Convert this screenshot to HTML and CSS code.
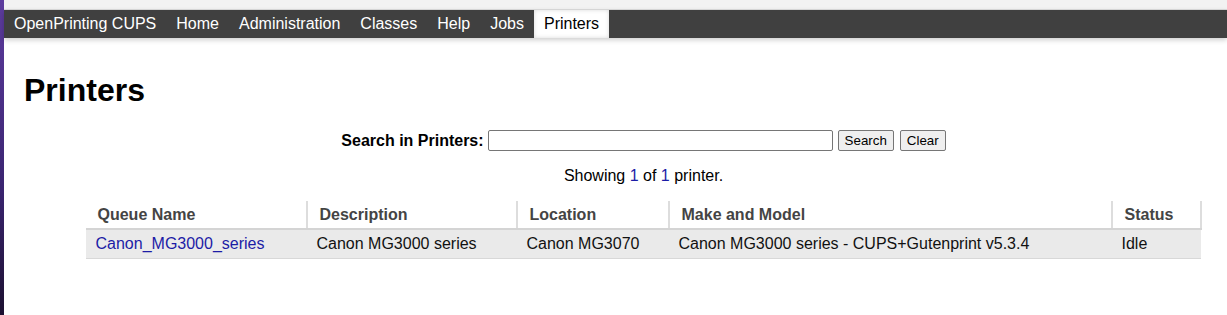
FILE: index.html
```html
<!DOCTYPE html>
<html lang="en">
<head>
    <meta charset="UTF-8">
    <title>Printers - CUPS</title>
    <link rel="stylesheet" href="styles.css">
</head>
<body>
<div class="desktop"></div>
<div class="window">
    <div class="topline"></div>
    <ul class="header">
        <li><a href="#">OpenPrinting CUPS</a></li>
        <li><a href="#">Home</a></li>
        <li><a href="#">Administration</a></li>
        <li><a href="#">Classes</a></li>
        <li><a href="#">Help</a></li>
        <li><a href="#">Jobs</a></li>
        <li><a class="active" href="#">Printers</a></li>
    </ul>
    <div class="body">
        <h1>Printers</h1>
        <div class="center">
            <form class="search">
                <label for="query">Search in Printers:</label>
                <input type="search" id="query" size="40">
                <button type="button">Search</button>
                <button type="button">Clear</button>
            </form>
            <p class="count">Showing <a href="#">1</a> of <a href="#">1</a> printer.</p>
            <table class="list">
                <colgroup>
                    <col style="width: 221px">
                    <col style="width: 210px">
                    <col style="width: 152px">
                    <col style="width: 443px">
                    <col style="width: 89px">
                </colgroup>
                <thead>
                <tr>
                    <th>Queue Name</th>
                    <th>Description</th>
                    <th>Location</th>
                    <th>Make and Model</th>
                    <th>Status</th>
                </tr>
                </thead>
                <tbody>
                <tr>
                    <td><a href="#">Canon_MG3000_series</a></td>
                    <td>Canon MG3000 series</td>
                    <td>Canon MG3070</td>
                    <td>Canon MG3000 series - CUPS+Gutenprint v5.3.4</td>
                    <td>Idle</td>
                </tr>
                </tbody>
            </table>
        </div>
    </div>
</div>
</body>
</html>
```

FILE: styles.css
```css
body {
    margin: 0;
    display: flex;
    height: 100vh;
    overflow: hidden;
    font-family: "Liberation Sans", Arial, sans-serif;
    font-size: 16px;
    color: #000;
    background-color: #fff;
}
.desktop {
    width: 4px;
    flex: none;
    background: linear-gradient(#5d3c9e, #3a2470 60%, #1c1030);
}
.window {
    flex: 1;
    min-width: 0;
}
.topline {
    height: 9px;
    background-color: #f2f2f2;
    border-bottom: 1px solid #dcdcdc;
}
.header {
    display: flex;
    margin: 0;
    padding: 0;
    list-style: none;
    height: 28px;
    background-color: #404040;
    box-shadow: 0 2px 5px rgba(0, 0, 0, 0.2);
}
.header a {
    display: block;
    padding: 0 10px;
    line-height: 28px;
    color: #fff;
    text-decoration: none;
}
.header a.active {
    background-color: #fff;
    color: #000;
    box-shadow: inset 0 0 4px rgba(0, 0, 0, 0.15);
}
.body {
    padding-left: 20px;
}
h1 {
    margin: 34px 0 0;
    font-size: 32px;
    line-height: 36px;
}
.center {
    margin-left: 36px;
    text-align: center;
}
.search {
    margin-top: 22px;
    display: flex;
    justify-content: center;
    align-items: center;
}
.search label {
    font-weight: bold;
    margin-right: 4px;
}
.search input {
    box-sizing: border-box;
    width: 345px;
    height: 21px;
    padding: 2px;
    font: 13.33px "Liberation Sans", Arial, sans-serif;
    border: 1px solid #767676;
    border-radius: 2px;
}
.search button {
    box-sizing: border-box;
    height: 21px;
    margin-left: 5px;
    padding: 0 6px;
    font: 13.33px "Liberation Sans", Arial, sans-serif;
    color: #000;
    background-color: #efefef;
    border: 1px solid #767676;
    border-radius: 2px;
}
.search button + button {
    margin-left: 6px;
}
.count {
    margin: 16px 0 0;
    line-height: 18px;
}
.count a, .list a {
    color: #1c1ca6;
    text-decoration: none;
}
.list {
    margin: 16px auto 0;
    border-collapse: collapse;
    table-layout: fixed;
    width: 1115px;
    text-align: left;
}
.list th {
    padding: 5px 10px 4px 12px;
    line-height: 18px;
    color: #444;
    border-right: 2px solid #ddd;
    border-bottom: 2px solid #d4d4d4;
}
.list td {
    padding: 5px 10px;
    line-height: 18px;
    color: #111;
    background-color: #eaeaea;
    border-bottom: 1px solid #d8d8d8;
}
```
